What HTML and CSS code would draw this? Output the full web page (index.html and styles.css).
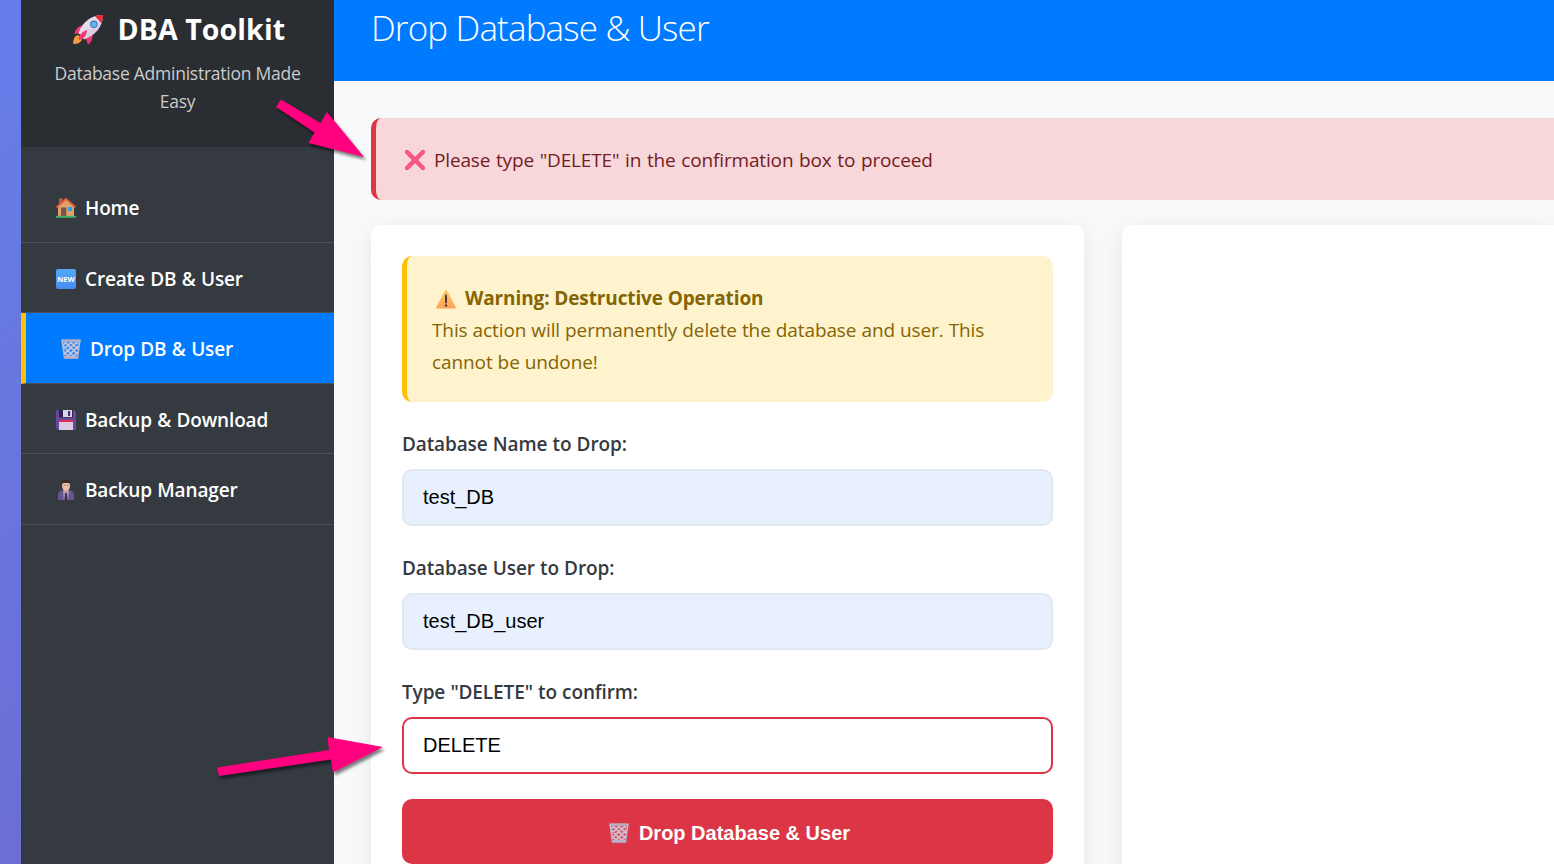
FILE: index.html
```
<!DOCTYPE html>
<html lang="en">
<head>
<meta charset="utf-8">
<title>DBA Toolkit</title>
<link rel="stylesheet" href="styles.css">
</head>
<body>
<svg class="defs" aria-hidden="true">
  <defs>
    <linearGradient id="metal" x1="0" y1="0" x2="0" y2="1"><stop offset="0" stop-color="#c9c3d8"/><stop offset="1" stop-color="#aaa3bb"/></linearGradient>
    <linearGradient id="blue" x1="0" y1="0" x2="0" y2="1"><stop offset="0" stop-color="#4fa9f5"/><stop offset="1" stop-color="#478df0"/></linearGradient>
    <linearGradient id="amber" x1="0" y1="0" x2="0" y2="1"><stop offset="0" stop-color="#ffc160"/><stop offset="1" stop-color="#fba65b"/></linearGradient>
    <linearGradient id="hull" x1="0" y1="0" x2="1" y2="1"><stop offset="0" stop-color="#f7edf8"/><stop offset="1" stop-color="#cdb9d5"/></linearGradient>
    <symbol id="bin" viewBox="0 0 20 20">
      <path d="M1.200 1.800h17.600L16.600 19H3.400z" fill="#c6c0d5" fill-opacity=".3" stroke="url(#metal)" stroke-width="1.500"/>
      <path d="M4 3l12.500 12M9.500 3l8 7.500M15 3l2 2M2.500 7.500L14 18.500M3 13l5 5M16 3L3 15M10.500 3L2.500 10.500M5 3L2.300 6M17.500 7L6 18M17 13l-5 5" stroke="#d0cadc" stroke-width="1.400"/>
      <path d="M.4.3h19.200v2.200H.4z" fill="#b5b0c3"/><path d="M3.200 17h13.600l-.2 2.600H3.400z" fill="#b9b2ca"/>
    </symbol>
  </defs>
</svg>
<div class="app">
  <aside class="sidebar">
    <div class="brand">
      <div class="brand-title">
        <svg class="rocket" viewBox="0 0 31 31">
          <path d="M5 21c-4 1-5 5-4.700 9 4 0 8-1 8.700-5z" fill="#f29a3f"/>
          <path d="M11 11.500c-5.500 0-9 4-9.500 8.500l8-1zM19.500 20c.5 5-1.500 9-4.500 10.500l-3-8z" fill="#f0366e"/>
          <path d="M5.500 19C9.500 8 18 1 30 1c0 12-8 20.500-19 24.500z" fill="url(#hull)"/>
          <path d="M22 2.200C24.500 1 27.500.8 30 1c.2 2.700-.3 5.700-1.500 8.300z" fill="#e5303f"/>
          <path d="M14 16c-5 2-9 5-8 10 5-1 8-5 8-10z" fill="#f23a72"/>
          <circle cx="20.800" cy="10.300" r="3.700" fill="#326caa"/><circle cx="20.800" cy="10.300" r="2.900" fill="#62aef2"/>
        </svg>
        <h1 class="brand-name">DBA Toolkit</h1>
      </div>
      <p class="tagline">Database Administration Made<br>Easy</p>
    </div>
    <nav class="nav">
      <a class="nav-item">
        <svg class="icon" viewBox="0 0 20 20"><path d="M3 .3h3.700V6H3z" fill="#a9623f"/><path d="M2 8l8-7.500L18 8v10.500H2z" fill="#dda169"/><path d="M.5 9.300L10 .9l9.500 8.400" fill="none" stroke="#e7583c" stroke-width="1.900"/><path d="M5 9.500h5.300V18H5z" fill="#80504b"/><path d="M12 9h4v4h-4z" fill="#26a3ef"/><path d="M0 17.800h20v1.900H0z" fill="#3eb568"/></svg>
        <span>Home</span></a>
      <a class="nav-item">
        <svg class="icon" viewBox="0 0 20 20"><rect width="20" height="20" rx="2" fill="url(#blue)"/><text x="10" y="12.700" class="new-text">NEW</text></svg>
        <span>Create DB &amp; User</span></a>
      <a class="nav-item active"><svg class="icon"><use href="#bin"/></svg><span>Drop DB &amp; User</span></a>
      <a class="nav-item">
        <svg class="icon" viewBox="0 0 20 20"><path d="M1 0h17l2 2v18H2l-2-2V1z" fill="#65499a"/><path d="M3 0h14v7.500H3z" fill="#35204f"/><path d="M7 0h9v7H7z" fill="#ded6e9"/><path d="M12 1h2.200v5H12z" fill="#49336b"/><path d="M3 10h14v10H3z" fill="#dcc9e4"/><path d="M3 10h14v2H3z" fill="#e02d53"/></svg>
        <span>Backup &amp; Download</span></a>
      <a class="nav-item">
        <svg class="icon" viewBox="0 0 20 20"><path d="M2 20v-5c0-3 2-4.500 5-5h6c3 .5 5 2 5 5v5z" fill="#66558f"/><path d="M7.500 8h5v3L10 14l-2.500-3z" fill="#d2a096"/><path d="M7 10.500l3 3 3-3-.8 9.500H7.800z" fill="#a69ac1"/><path d="M9.200 13h1.600l.9 7H8.300z" fill="#403057"/><path d="M6 3h8v3c0 3-2 4.500-4 4.500S6 9 6 6z" fill="#efbeaa"/><path d="M5.500 5.500C5 2 7-.1 10 .1c3.200-.2 5 1.900 4.500 5.400L13.300 3H7z" fill="#33282e"/><path d="M7.300 5.200h2M10.800 5.200h2" stroke="#59403e" stroke-width=".7"/></svg>
        <span>Backup Manager</span></a>
    </nav>
  </aside>
  <main class="main">
    <header class="topbar"><h2 class="page-title">Drop Database &amp; User</h2></header>
    <div class="content">
      <div class="alert">
        <svg class="icon" viewBox="0 0 20 20"><path d="M2 2l16 16M18 2L2 18" stroke="#ea4779" stroke-width="4.200" stroke-linecap="round"/><path d="M2 2l16 16M18 2L2 18" stroke="#ff5c83" stroke-width="2.400" stroke-linecap="round"/></svg>
        <span class="alert-text">Please type "DELETE" in the confirmation box to proceed</span>
      </div>
      <div class="cards">
        <section class="card">
          <div class="warning">
            <div class="warning-head">
              <svg class="icon" viewBox="0 0 20 20"><path d="M9.200 1.600q.8-1.200 1.600 0L19.700 18q.5 1.500-1 1.500H1.300q-1.500 0-1-1.500z" fill="url(#amber)"/><path d="M10 6.500v7" stroke="#4b3b41" stroke-width="2" stroke-linecap="round"/><circle cx="10" cy="16.500" r="1.200" fill="#4b3b41"/></svg>
              <strong class="warning-title">Warning: Destructive Operation</strong>
            </div>
            <div class="warning-line">This action will permanently delete the database and user. This</div>
            <div class="warning-line">cannot be undone!</div>
          </div>
          <div class="field"><label class="label">Database Name to Drop:</label><div class="input">test_DB</div></div>
          <div class="field"><label class="label">Database User to Drop:</label><div class="input">test_DB_user</div></div>
          <div class="field"><label class="label">Type "DELETE" to confirm:</label><div class="input danger">DELETE</div></div>
          <div class="button"><svg class="icon"><use href="#bin"/></svg><span>Drop Database &amp; User</span></div>
        </section>
        <section class="card card-side"></section>
      </div>
    </div>
  </main>
</div>
<svg class="arrows" viewBox="0 0 1554 864" aria-hidden="true">
  <path d="M281 99.500L320.500 123 327 112 364 157 308.500 143 314.500 132.500 276 107z"/>
  <path d="M217 767.500L329 750 327.500 737 383 747 333 772.500 331 759.500 219 776z"/>
</svg>
</body>
</html>
```
FILE: styles.css
```
* { box-sizing: border-box; margin: 0; padding: 0; }
body { width: 1554px; height: 864px; overflow: hidden; font-family: "Open Sans", "Noto Sans", sans-serif; }
.defs { position: absolute; width: 0; height: 0; }
.app { display: flex; height: 864px; padding-left: 21px; background: linear-gradient(135deg, #667eea 0%, #764ba2 100%) 0 0 / 1554px 1200px; }
.sidebar { width: 313px; flex: none; background: #343a40; color: #fff; }
.brand { height: 147px; padding-top: 9px; background: #2a2d31; text-align: center; }
.brand-title { display: flex; align-items: center; height: 40px; padding-left: 52px; gap: 13.5px; }
.rocket { width: 31px; height: 31px; flex: none; }
.brand-name { font-size: 28.5px; font-weight: 700; line-height: 40px; white-space: nowrap; letter-spacing: .1px; }
.tagline { margin-top: 10px; font-size: 17.5px; line-height: 28px; color: #cacbcc; letter-spacing: -.25px; white-space: nowrap; }
.nav { padding-top: 25px; }
.nav-item { display: flex; align-items: center; gap: 9px; height: 70.5px; padding: 3px 0 0 35px; border-bottom: 1px solid #495057; font-size: 19px; font-weight: 600; white-space: nowrap; letter-spacing: -.15px; word-spacing: .6px; }
.nav-item.active { background: #007bff; border-left: 5px solid #ffc107; }
.icon { width: 20px; height: 20px; flex: none; overflow: visible; }
.new-text { font: 700 7.5px "Open Sans", sans-serif; fill: #fff; text-anchor: middle; letter-spacing: 0; }
.main { flex: 1; min-width: 0; overflow: hidden; background: #f8f9fa; }
.topbar { height: 81px; padding: 3px 0 0 37px; background: #007bff; color: #fff; }
.page-title { font-size: 35px; line-height: 50px; font-weight: 300; white-space: nowrap; letter-spacing: -.85px; }
.content { padding: 37px 0 0 37px; }
.alert { display: flex; align-items: center; gap: 9px; height: 82px; padding: 2px 0 0 29px; border-left: 5px solid #dc3545; border-radius: 10px 0 0 10px; background: #f8d7da; color: #721c24; font-size: 19px; white-space: nowrap; }
.alert-text { letter-spacing: -.15px; word-spacing: .9px; }
.cards { display: flex; gap: 38px; margin-top: 25px; }
.card { width: 713px; height: 720px; flex: none; padding: 31px; border-radius: 10px; background: #fff; box-shadow: 0 6px 25px rgba(0, 0, 0, .08); }
.card-side { flex: 1; width: auto; border-radius: 10px 0 0 10px; }
.warning { height: 146px; padding: 26px 0 0 25px; border-left: 5px solid #ffc107; border-radius: 10px; background: #fff3cd; color: #856404; font-size: 19px; line-height: 32px; white-space: nowrap; }
.warning-head { display: flex; align-items: center; gap: 9px; height: 32px; padding-left: 4px; }
.warning-head .icon { position: relative; top: 1px; }
.warning-title { font-weight: 700; letter-spacing: -.12px; }
.warning-line { letter-spacing: -.1px; word-spacing: .2px; }
.field { height: 124px; padding-top: 26px; }
.field .label { display: block; height: 41px; line-height: 32px; font-size: 19px; font-weight: 600; color: #343a40; letter-spacing: -.12px; word-spacing: .4px; white-space: nowrap; }
.input { height: 57px; padding-left: 19px; border: 2px solid #e2e8f1; border-radius: 10px; background: #e8f0fe; color: #000; font: 20px/52px "Liberation Sans", Arial, sans-serif; }
.input.danger { border-color: #dc3545; background: #fff; }
.button { display: flex; align-items: center; justify-content: center; gap: 10px; height: 65px; margin-top: 25px; padding: 3px 0 0 4px; border-radius: 10px; background: #dc3545; color: #fff; font: 700 20px "Liberation Sans", Arial, sans-serif; }
.arrows { position: absolute; left: 0; top: 0; width: 1554px; height: 864px; fill: #ff007f; filter: drop-shadow(2px 3px 1.500px rgba(0, 0, 0, .5)); pointer-events: none; }
```
